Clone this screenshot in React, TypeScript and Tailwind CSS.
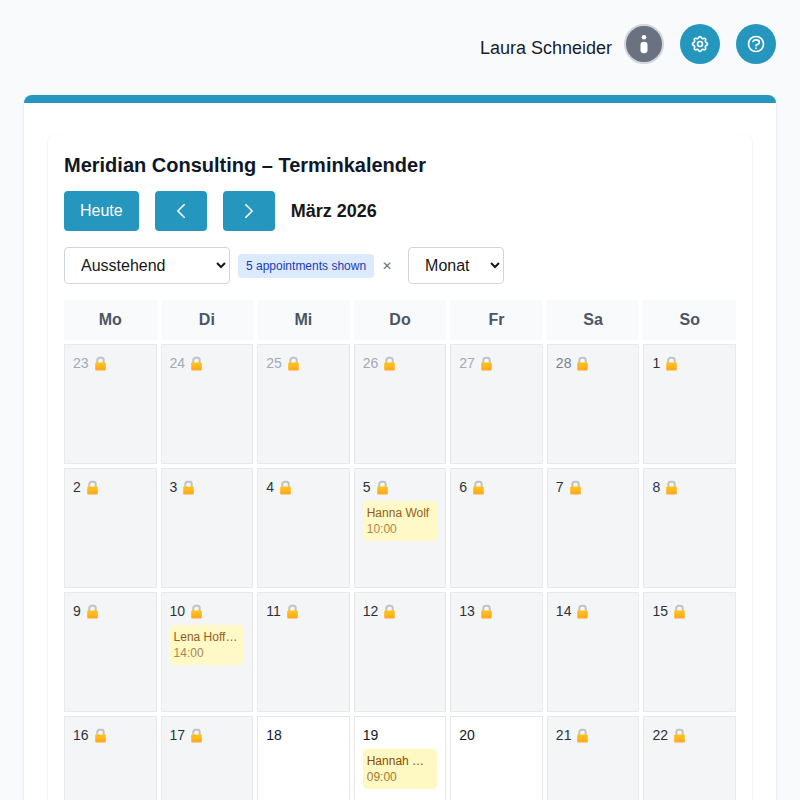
import React from 'react';
import { HiOutlineCog, HiOutlineQuestionMarkCircle } from 'react-icons/hi';

interface Appointment {
  name: string;
  time: string;
}

interface Day {
  day: number;
  tone: string;
  locked: boolean;
  appointment?: Appointment;
}

const WEEKDAYS = ['Mo', 'Di', 'Mi', 'Do', 'Fr', 'Sa', 'So'];

const APPOINTMENTS: Record<number, Appointment> = {
  5: { name: 'Hanna Wolf', time: '10:00' },
  10: { name: 'Lena Hoffmann', time: '14:00' },
  19: { name: 'Hannah Wagner', time: '09:00' },
};

const OPEN_DAYS = [18, 19, 20];

const DAYS: Day[] = [
  ...[23, 24, 25, 26, 27, 28].map(day => ({
    day,
    tone: day === 28 ? 'text-gray-500' : 'text-gray-400',
    locked: true,
  })),
  ...Array.from({ length: 22 }, (_, i) => ({
    day: i + 1,
    tone: 'text-gray-900',
    locked: !OPEN_DAYS.includes(i + 1),
    appointment: APPOINTMENTS[i + 1],
  })),
];

export default function App() {
  return (
    <div className="h-screen overflow-hidden bg-[#f9fafc] px-6 pt-6 font-['Liberation_Sans',Arial,sans-serif] text-gray-900">
      <Header />
      <main className="mt-[31px] rounded-lg border-t-8 border-[#2596be] bg-white px-6 py-8 shadow">
        <div className="rounded-lg bg-white p-4 shadow-sm">
          <h1 className="text-xl font-bold">Meridian Consulting – Terminkalender</h1>
          <Toolbar />
          <Filters />
          <Calendar />
        </div>
      </main>
    </div>
  );
}

function Header() {
  return (
    <header className="flex items-center justify-end gap-4">
      <div className="flex items-center gap-3">
        <span className="pt-2 text-lg text-[#171d2b]">Laura Schneider</span>
        <div className="flex h-10 w-10 items-center justify-center rounded-full border-2 border-gray-300 bg-gray-500">
          <svg className="h-9 w-9" viewBox="0 0 36 36" fill="white">
            <circle cx="18" cy="11.2" r="2.3" />
            <rect x="14.5" y="15.8" width="7" height="11.4" rx="3.2" />
          </svg>
        </div>
      </div>
      <button className="flex h-10 w-10 items-center justify-center rounded-full bg-[#2596be] text-white">
        <HiOutlineCog className="h-5 w-5" />
      </button>
      <button className="flex h-10 w-10 items-center justify-center rounded-full bg-[#2596be] text-white">
        <HiOutlineQuestionMarkCircle className="h-5 w-5" />
      </button>
    </header>
  );
}

function Chevron({ path }: { path: string }) {
  return (
    <svg
      className="h-5 w-5"
      viewBox="0 0 24 24"
      fill="none"
      stroke="currentColor"
      strokeWidth="2"
      strokeLinecap="round"
      strokeLinejoin="round"
    >
      <path d={path} />
    </svg>
  );
}

function Toolbar() {
  return (
    <div className="mt-3 flex items-center gap-4">
      <button className="h-10 rounded bg-[#2596be] px-4 text-white">Heute</button>
      <button className="flex h-10 w-[52px] items-center justify-center rounded bg-[#2596be] text-white">
        <Chevron path="M15.75 19.5 8.25 12l7.5-7.5" />
      </button>
      <button className="flex h-10 w-[52px] items-center justify-center rounded bg-[#2596be] text-white">
        <Chevron path="m8.25 4.5 7.5 7.5-7.5 7.5" />
      </button>
      <span className="text-lg font-bold text-neutral-900">März 2026</span>
    </div>
  );
}

function Filters() {
  return (
    <div className="mt-4 flex items-center text-neutral-900">
      <select className="h-[37px] w-[166px] rounded border border-gray-300 bg-white px-3">
        <option>Ausstehend</option>
        <option>Bestätigt</option>
      </select>
      <span className="ml-2 rounded bg-blue-100 px-2 py-1 text-xs text-blue-800">5 appointments shown</span>
      <button className="ml-2 w-[10px] text-center text-xs text-gray-500">✕</button>
      <select className="ml-4 h-[37px] w-24 rounded border border-gray-300 bg-white px-3">
        <option>Monat</option>
        <option>Woche</option>
      </select>
    </div>
  );
}

function Calendar() {
  return (
    <div className="mt-4 grid grid-cols-7 gap-1">
      {WEEKDAYS.map(weekday => (
        <div key={weekday} className="bg-[#f9fafc] py-2 text-center font-bold text-gray-600">
          {weekday}
        </div>
      ))}
      {DAYS.map((item, idx) => (
        <DayCell key={idx} item={item} />
      ))}
    </div>
  );
}

function DayCell({ item }: { item: Day }) {
  return (
    <div
      className={`h-[120px] min-w-0 border border-gray-200 p-2 ${
        item.locked ? 'bg-gray-100 opacity-90' : 'bg-white'
      }`}
    >
      <div className={`flex h-5 items-center text-sm ${item.tone}`}>
        {item.day}
        {item.locked && <LockIcon />}
      </div>
      {item.appointment && (
        <div className="mt-1 rounded bg-yellow-100 p-1 text-xs text-yellow-800">
          <div className="truncate">{item.appointment.name}</div>
          <div className="opacity-75">{item.appointment.time}</div>
        </div>
      )}
    </div>
  );
}

function LockIcon() {
  return (
    <svg className="mt-px ml-1.5 h-[15px] w-[11px] shrink-0" viewBox="0 0 11 15" fill="none">
      <defs>
        <linearGradient id="lock-body" x1="0" y1="0" x2="0" y2="1">
          <stop offset="0" stopColor="#ffc000" />
          <stop offset="1" stopColor="#ff9d0a" />
        </linearGradient>
      </defs>
      <path d="M2.3 8V4.2a2.4 2.4 0 0 1 2.4-2.4h1.6a2.4 2.4 0 0 1 2.4 2.4V8" stroke="#bcbcbc" strokeWidth="2" />
      <rect x="0.2" y="6.5" width="10.6" height="7.9" rx="0.9" fill="url(#lock-body)" />
    </svg>
  );
}
